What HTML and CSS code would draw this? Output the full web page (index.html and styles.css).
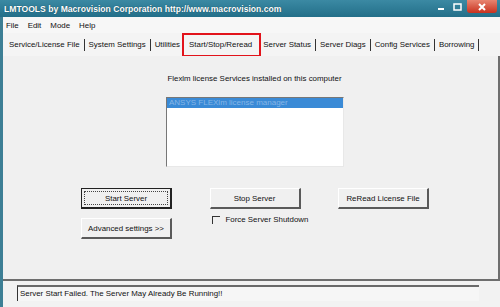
FILE: index.html
```html
<!DOCTYPE html>
<html>
<head>
<meta charset="utf-8">
<link rel="stylesheet" href="styles.css">
</head>
<body>
<div class="window">
  <div class="titlebar">
    <span class="title">LMTOOLS by Macrovision Corporation http://www.macrovision.com</span>
    <div class="winbtns">
      <span class="wbtn"><svg width="12" height="10" viewBox="0 0 12 10"><rect x="3" y="6" width="6" height="2" fill="#fff"/></svg></span>
      <span class="wbtn"><svg width="12" height="10" viewBox="0 0 12 10"><rect x="3" y="2" width="7" height="6" fill="none" stroke="#fff" stroke-width="1.5"/></svg></span>
      <span class="wbtn close"><svg width="12" height="10" viewBox="0 0 12 10"><path d="M3 2 L9 8 M9 2 L3 8" stroke="#fff" stroke-width="2"/></svg></span>
    </div>
  </div>
  <div class="frame">
    <div class="edge"></div>
    <div class="main">
      <div class="menubar">
        <span class="menu">File</span>
        <span class="menu">Edit</span>
        <span class="menu">Mode</span>
        <span class="menu">Help</span>
      </div>
      <div class="tabs">
        <span class="tab">Service/License File</span>
        <span class="tab">System Settings</span>
        <span class="tab before">Utilities</span>
        <span class="tab active">Start/Stop/Reread</span>
        <span class="tab">Server Status</span>
        <span class="tab">Server Diags</span>
        <span class="tab">Config Services</span>
        <span class="tab">Borrowing</span>
      </div>
      <div class="panel">
        <div class="caption">Flexlm license Services installed on this computer</div>
        <div class="listbox">
          <div class="item selected">ANSYS FLEXlm license manager</div>
        </div>
        <div class="buttons">
          <div class="btn default"><span class="focus">Start Server</span></div>
          <div class="btn">Stop Server</div>
          <div class="btn">ReRead License File</div>
          <div class="btn">Advanced settings &gt;&gt;</div>
          <label class="check"><span class="box"></span>Force Server Shutdown</label>
        </div>
      </div>
      <div class="statusarea">
        <div class="status">Server Start Failed. The Server May Already Be Running!!</div>
      </div>
    </div>
  </div>
</div>
</body>
</html>
```
FILE: styles.css
```css
* { box-sizing: border-box; }
html, body { margin: 0; padding: 0; }
body {
  width: 500px;
  height: 307px;
  overflow: hidden;
  font-family: "Liberation Sans", Arial, sans-serif;
  font-size: 7.9px;
  color: #111;
  background: #f0f0f0;
}
.window { width: 500px; height: 307px; display: flex; flex-direction: column; }
.titlebar {
  height: 17px;
  flex: none;
  background: linear-gradient(#3b89a3, #236f89);
  display: flex;
  align-items: flex-start;
  justify-content: space-between;
}
.title {
  color: #fff;
  font-weight: bold;
  font-size: 8.6px;
  padding: 4px 0 0 4px;
  text-shadow: 0 0 1px #0b3a4a;
}
.winbtns { display: flex; align-items: flex-start; margin-right: 3px; }
.wbtn {
  width: 16px; height: 13px;
  display: flex; align-items: center; justify-content: center;
}
.wbtn.close {
  width: 30px;
  margin-left: 2px;
  background: linear-gradient(#e88470, #c8321f);
  border-radius: 0 0 3px 3px;
}
.frame { flex: 1; display: flex; min-height: 0; }
.edge { width: 3px; background: #3d7f95; flex: none; }
.main { flex: 1; display: flex; flex-direction: column; }
.menubar {
  height: 16px;
  flex: none;
  background: #f7f7f7;
  display: flex;
  align-items: center;
  padding-left: 2px;
  gap: 7px;
}
.menu { padding: 0 1px; }
.tabs {
  height: 23px;
  flex: none;
  background: #f4f4f4;
  display: flex;
  align-items: center;
  padding-left: 6px;
  white-space: nowrap;
}
.tab {
  padding: 0 4px 0 0;
  margin-right: 4px;
  border-right: 1px solid #333;
  line-height: 12px;
}
.tab.before { border-right: none; margin-right: 0; padding-right: 2px; }
.tab.active {
  border: 2px solid #e2131b;
  padding: 4px 7px 4px 5px;
  margin: 0 2px 0 0;
  line-height: 12px;
}
.panel {
  flex: 1;
  border-right: 2px solid #6e6e6e;
  border-bottom: 2px solid #6e6e6e;
  display: flex;
  flex-direction: column;
  align-items: center;
  padding-top: 18px;
  background: #f0f0f0;
}
.caption { margin-left: 8px; }
.listbox {
  margin-top: 14px;
  margin-left: 9px;
  width: 178px;
  height: 70px;
  background: #fff;
  border-top: 1px solid #777;
  border-left: 1px solid #777;
  border-right: 1px solid #e8e8e8;
  border-bottom: 1px solid #e8e8e8;
}
.item { height: 10px; line-height: 10px; padding-left: 2px; font-size: 8px; }
.item.selected { background: #3a8ad6; color: #86b6e6; }
.buttons {
  margin-top: 21px;
  margin-left: 9px;
  display: grid;
  grid-template-columns: 91px 91px 91px;
  grid-template-rows: 21px 21px;
  column-gap: 37.5px;
  row-gap: 9px;
}
.btn {
  display: flex;
  align-items: center;
  justify-content: center;
  background: #f0f0f0;
  white-space: nowrap;
  border-top: 1px solid #fff;
  border-left: 1px solid #fff;
  border-right: 2px solid #5a5a5a;
  border-bottom: 2px solid #5a5a5a;
}
.btn.default {
  border: 1px solid #222;
  border-right-width: 2px;
  border-bottom-width: 2px;
  padding: 2px;
}
.focus {
  width: 100%; height: 100%;
  border: 1px dotted #444;
  display: flex; align-items: center; justify-content: center;
}
.check {
  display: flex;
  align-items: center;
  align-self: start;
  white-space: nowrap;
  margin-top: -3px;
  margin-left: 2px;
}
.box {
  flex: none;
  width: 8px; height: 8px;
  border-top: 1px solid #333;
  border-left: 1px solid #333;
  margin-right: 6px;
}
.statusarea {
  flex: none;
  height: 26px;
  padding: 4px 21px 0 14px;
  background: #f2f2f2;
}
.status {
  border-top: 2px solid #6a6a6a;
  border-left: 1px solid #333;
  height: 16px;
  padding: 1px 0 0 2px;
  line-height: 12px;
  background: #f6f6f6;
}
```
